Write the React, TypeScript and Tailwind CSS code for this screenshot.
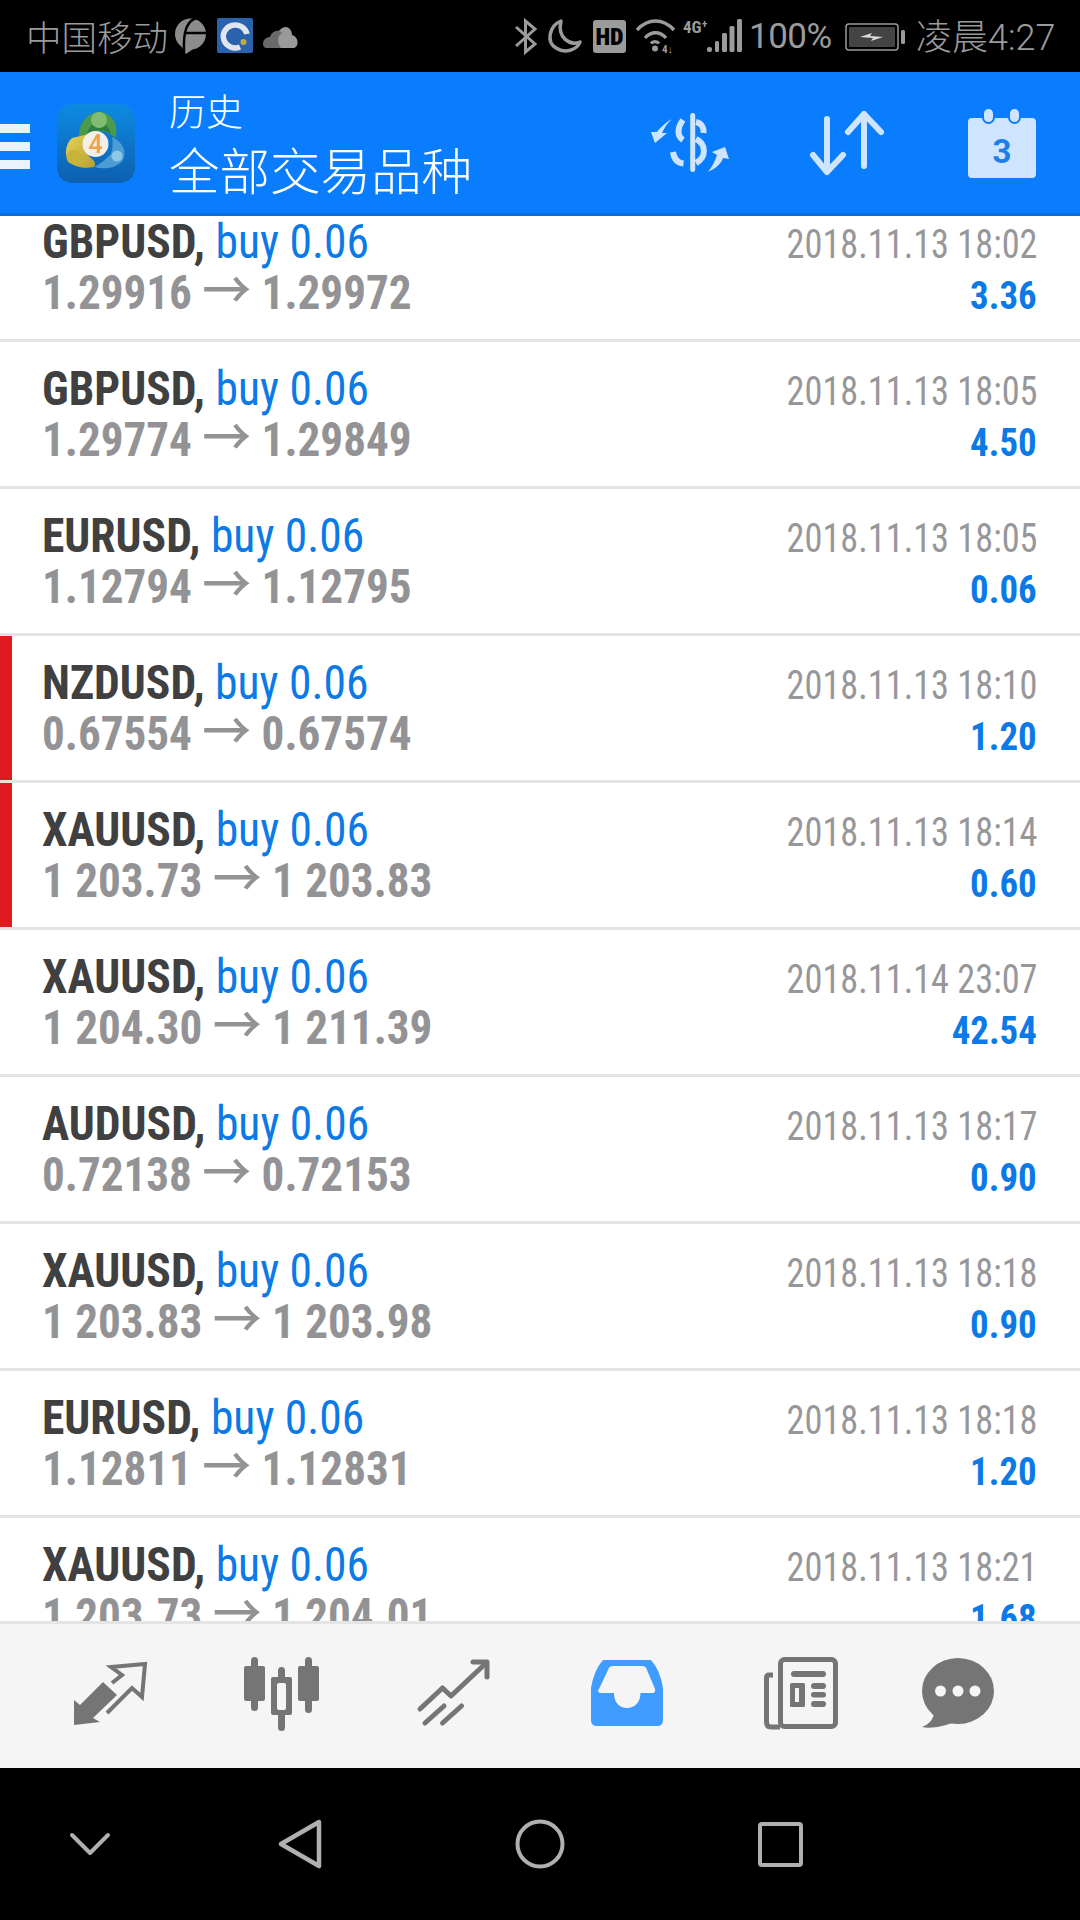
import React from "react";

const rows = [
  { s: "GBPUSD", a: "1.29916", b: "1.29972", d: "2018.11.13 18:02", p: "3.36" },
  { s: "GBPUSD", a: "1.29774", b: "1.29849", d: "2018.11.13 18:05", p: "4.50" },
  { s: "EURUSD", a: "1.12794", b: "1.12795", d: "2018.11.13 18:05", p: "0.06" },
  { s: "NZDUSD", a: "0.67554", b: "0.67574", d: "2018.11.13 18:10", p: "1.20", red: true },
  { s: "XAUUSD", a: "1 203.73", b: "1 203.83", d: "2018.11.13 18:14", p: "0.60", red: true },
  { s: "XAUUSD", a: "1 204.30", b: "1 211.39", d: "2018.11.14 23:07", p: "42.54" },
  { s: "AUDUSD", a: "0.72138", b: "0.72153", d: "2018.11.13 18:17", p: "0.90" },
  { s: "XAUUSD", a: "1 203.83", b: "1 203.98", d: "2018.11.13 18:18", p: "0.90" },
  { s: "EURUSD", a: "1.12811", b: "1.12831", d: "2018.11.13 18:18", p: "1.20" },
  { s: "XAUUSD", a: "1 203.73", b: "1 204.01", d: "2018.11.13 18:21", p: "1.68" },
];

function Row({ r }: { r: (typeof rows)[number] }) {
  return (
    <div className="flex h-[147px] shrink-0 border-b-[3px] border-[#e4e4e4]">
      <div className={r.red ? "w-[12px] shrink-0 bg-[#e01b20]" : "w-[12px] shrink-0"} />
      <div className="flex flex-1 justify-between pl-[30px] pr-[43px] pt-[22px] [font-stretch:75%]">
        <div className="flex flex-col whitespace-nowrap">
          <div className="h-[50px] origin-left scale-x-[.93] text-[49px] leading-[50px]">
            <span className="font-bold text-[#404040]">{r.s}, </span>
            <span className="text-[#0b7ae6]">buy 0.06</span>
          </div>
          <div className="h-[50px] origin-left scale-x-[.94] text-[48px] leading-[50px] font-bold text-[#939396]">
            {r.a} <span className="text-[52px] font-medium">→</span> {r.b}
          </div>
        </div>
        <div className="flex flex-col items-end whitespace-nowrap">
          <div className="origin-right scale-x-[.885] pt-[2px] text-[41px] leading-[50px] text-[#97979a]">{r.d}</div>
          <div className="origin-right scale-x-[.97] pt-[2px] text-[38px] leading-[50px] font-bold text-[#0b7ae6]">{r.p}</div>
        </div>
      </div>
    </div>
  );
}

const G = "#9b9b9b";

function StatusLeftIcons() {
  return (
    <svg width="130" height="72" viewBox="170 0 130 72" className="shrink-0">
      <circle cx="190.5" cy="34" r="15.5" fill="#8c8c8c" />
      <path d="M181,46 L186,54 L196,47 Z" fill="#8c8c8c" />
      <path d="M199,17 C187,20 183,30 184,52" fill="none" stroke="#000" strokeWidth="2.5" />
      <path d="M184,33 H208" fill="none" stroke="#000" strokeWidth="2.5" />
      <rect x="217" y="18" width="36" height="35" rx="2" fill="#2a62ae" />
      <path d="M247,34 A12,11.5 0 1 0 240,47" fill="none" stroke="#dfe6ee" strokeWidth="5.5" />
      <circle cx="243.5" cy="42" r="3" fill="#c9a93f" />
      <path d="M276,48 C272,40 273,33 280,30 C285,24 292,28 292,35 C298,36 300,46 294,48 Z" fill="#9a9a9a" />
      <path d="M263,44 C263,39 267,37 270,37 C272,30 280,29 282,33 C276,37 278,44 281,48 H267 C264,48 263,46 263,44 Z" fill="#6a6a6a" />
    </svg>
  );
}

function StatusRightIcons() {
  return (
    <svg width="230" height="72" viewBox="513 0 230 72" className="shrink-0">
      <path d="M516,27 L535,44 L525.5,52 V21 L535,29 L516,46" fill="none" stroke={G} strokeWidth="3" />
      <path d="M561,21 C549,26 546,42 556,48 C565,54 577,50 580,42 C570,46 557,38 561,21 Z" fill="none" stroke={G} strokeWidth="3.5" strokeLinejoin="round" />
      <rect x="593" y="20" width="33" height="33" rx="3" fill={G} />
      <text x="609.5" y="45" textAnchor="middle" fontFamily="Roboto, sans-serif" fontWeight="900" fontSize="24" fill="#000" style={{ fontStretch: "75%" }}>HD</text>
      <path d="M637,30 C648,18 663,18 674,30 M645,38 C651,31 660,31 666,38 M651,43.5 C653,41 657,41 659,43.5" fill="none" stroke={G} strokeWidth="3.4" />
      <circle cx="655" cy="48.5" r="3" fill={G} />
      <text x="662" y="53" fontFamily="Roboto, sans-serif" fontWeight="700" fontSize="11" fill={G} style={{ fontStretch: "75%" }}>4↓</text>
      <text x="683" y="33" fontFamily="Roboto, sans-serif" fontWeight="700" fontSize="17" fill={G} style={{ fontStretch: "75%" }}>4G⁺</text>
      <rect x="707" y="47" width="5" height="5" rx="2" fill={G} />
      <rect x="715" y="41" width="4" height="11" rx="1.5" fill={G} />
      <rect x="722" y="33" width="5" height="19" rx="1.5" fill={G} />
      <rect x="729.5" y="26" width="5" height="26" rx="1.5" fill={G} />
      <rect x="737" y="19" width="5" height="33" rx="1.5" fill={G} />
    </svg>
  );
}

function Battery() {
  return (
    <svg width="62" height="72" viewBox="844 0 62 72" className="shrink-0">
      <rect x="845" y="24" width="52" height="26" rx="3" fill="none" stroke={G} strokeWidth="1.5" />
      <rect x="848" y="27" width="46" height="20" rx="1" fill="#444" />
      <path d="M859,37 L871,33 L869,36 L882,37 L870,41 L872,38 Z" fill="#ddd" />
      <rect x="900" y="30" width="4" height="14" rx="1.5" fill={G} />
    </svg>
  );
}

function Logo() {
  return (
    <svg width="78" height="79" viewBox="0 0 78 79" className="shrink-0">
      <defs>
        <linearGradient id="lg" x1="0" y1="0" x2="0" y2="1">
          <stop offset="0" stopColor="#0c8be2" />
          <stop offset="1" stopColor="#0e5fb0" />
        </linearGradient>
        <linearGradient id="ly" x1="0" y1="0" x2="1" y2="1">
          <stop offset="0" stopColor="#e6d25a" />
          <stop offset="1" stopColor="#b8a030" />
        </linearGradient>
      </defs>
      <rect width="78" height="79" rx="15" fill="url(#lg)" />
      <path d="M23,37 C19,22 30,8 42,8 C55,8 63,22 58,34 C50,24 33,25 23,37 Z" fill="#4c9a4c" />
      <path d="M30,30 C32,22 37,18 42,20 C47,18 52,22 54,30 C47,25 37,25 30,30 Z" fill="#2f7d45" />
      <circle cx="42" cy="16" r="8" fill="#7fbd73" />
      <path d="M15,34 L32,30 C26,36 26,44 32,52 C36,56 40,58 37,63 C28,65 18,63 12,58 C7,52 8,40 15,34 Z" fill="url(#ly)" />
      <circle cx="17" cy="53" r="7.5" fill="#c8b23a" />
      <path d="M55,33 C66,38 70,48 66,56 C60,64 48,66 37,63 C44,60 50,54 54,50 C56,44 56,38 55,33 Z" fill="#4d9cd4" />
      <circle cx="60" cy="52" r="5.5" fill="#8cc8e8" />
      <circle cx="38.5" cy="40" r="13" fill="#f2efe9" />
      <text x="38.5" y="49" textAnchor="middle" fontFamily="Roboto, sans-serif" fontWeight="500" fontSize="25" fill="#f0a24a">4</text>
    </svg>
  );
}

const L = "#cfe5ff";

function HeaderActions() {
  return (
    <svg width="400" height="141" viewBox="650 72 400 141" className="shrink-0">
      <path d="M692.7,115.5 V169.5" stroke={L} strokeWidth="5" strokeLinecap="round" />
      <path d="M696,122 C701,123 704,127 703.5,133 M683,120 C677,128 677,136 683,140 M696,139 C706,144 707,157 696,163 M673,152 C674,159 678,163 683.5,163.5" fill="none" stroke={L} strokeWidth="6" />
      <path d="M671.7,119 C664,124 660,128 657,132 L651,132 L655,143 L667,133 L662,133 C664,128 667,124 671.7,119 Z" fill={L} />
      <path d="M708,172 C716,168 721,164 723,158 L729,159 L725,147 L712,152 L717,155 C715,161 712,167 708,172 Z" fill={L} />
      <path d="M827,119 V172 M813,155 L827,172 L843,155" fill="none" stroke={L} strokeWidth="6" strokeLinecap="round" strokeLinejoin="round" />
      <path d="M864,114 V166 M848,132 L864,114 L881,132" fill="none" stroke={L} strokeWidth="6" strokeLinecap="round" strokeLinejoin="round" />
      <rect x="968" y="118" width="68" height="60" rx="4" fill={L} />
      <rect x="983" y="108" width="11" height="15" rx="5.5" fill={L} stroke="#0a7dff" strokeWidth="2" />
      <rect x="1009" y="108" width="11" height="15" rx="5.5" fill={L} stroke="#0a7dff" strokeWidth="2" />
      <text x="1002" y="163" textAnchor="middle" fontFamily="Roboto, sans-serif" fontWeight="700" fontSize="33" fill="#1a7fe8">3</text>
    </svg>
  );
}

const T = "#757575";

function Tabs() {
  return (
    <div className="flex h-[147px] shrink-0 border-t-[3px] border-[#e4e4e4] bg-[#f5f5f5] pl-[70px] pt-[31px]">
      <svg width="80" height="80" viewBox="70 1655 80 80" className="shrink-0">
        <path d="M74,1725 V1700 L80,1705 L103,1682 L117,1695 L93,1718 L100,1722 Z" fill={T} />
        <path d="M112,1683 L122,1675 L111,1667 L145,1664 L142,1697 L132,1688 L107,1713" fill="none" stroke={T} strokeWidth="4" />
      </svg>
      <svg width="83" height="82" viewBox="240 1655 83 82" className="ml-[90px] shrink-0">
        <rect x="251" y="1657" width="7" height="54" rx="3.5" fill={T} />
        <rect x="244" y="1666" width="21" height="35" rx="2" fill={T} />
        <rect x="278" y="1667" width="7" height="64" rx="3.5" fill={T} />
        <rect x="271" y="1677" width="21" height="38" rx="2" fill={T} />
        <rect x="277" y="1683" width="9" height="27" rx="2" fill="#f5f5f5" />
        <rect x="305" y="1657" width="7" height="56" rx="3.5" fill={T} />
        <rect x="298" y="1666" width="21" height="35" rx="2" fill={T} />
      </svg>
      <svg width="77" height="80" viewBox="415 1655 77 80" className="ml-[92px] shrink-0">
        <path d="M420,1709 L442.5,1688 L451,1696 L484,1665" fill="none" stroke={T} strokeWidth="5" strokeLinecap="round" strokeLinejoin="round" />
        <path d="M473,1662 H487 V1677" fill="none" stroke={T} strokeWidth="5" strokeLinecap="round" strokeLinejoin="round" />
        <path d="M425,1723 L444,1706 M442.5,1723 L461.5,1706" fill="none" stroke={T} strokeWidth="5" strokeLinecap="round" />
      </svg>
      <svg width="78" height="80" viewBox="588 1655 78 80" className="ml-[96px] shrink-0">
        <path d="M603,1660 H651 Q660,1670 663,1688 V1720 Q663,1726 657,1726 H597 Q591,1726 591,1720 V1688 Q594,1670 603,1660 Z" fill="#409cff" />
        <path d="M598,1691 Q598,1692 600,1693 H614 C614,1703 620,1708 627,1708 C634,1708 640.5,1703 640.5,1693 H653 Q656,1692 655,1689 L647,1670 Q646,1666 642,1666 H613 Q609,1666 608,1670 Z" fill="#f5f5f5" />
      </svg>
      <svg width="82" height="80" viewBox="760 1655 82 80" className="ml-[94px] shrink-0">
        <rect x="780.5" y="1659.5" width="55" height="67" rx="4" fill="none" stroke={T} strokeWidth="5" />
        <path d="M773,1675 H769 Q766.5,1675 766.5,1678 V1722 Q766.5,1727 771,1727 H780" fill="none" stroke={T} strokeWidth="5" />
        <rect x="791" y="1671" width="35" height="6" rx="3" fill={T} />
        <rect x="790" y="1683" width="15" height="24" rx="1.5" fill={T} />
        <rect x="795" y="1688" width="4" height="14" fill="#f5f5f5" />
        <rect x="811" y="1683" width="15" height="6" rx="3" fill={T} />
        <rect x="811" y="1692" width="15" height="5.5" rx="2.75" fill={T} />
        <rect x="811" y="1701" width="15" height="6" rx="3" fill={T} />
      </svg>
      <svg width="80" height="80" viewBox="918 1655 80 80" className="ml-[76px] shrink-0">
        <ellipse cx="958" cy="1691" rx="36" ry="33" fill={T} />
        <path d="M934,1712 C934,1718 930,1724 922,1727 C932,1729 945,1726 954,1722 Z" fill={T} />
        <circle cx="940.5" cy="1691" r="5.5" fill="#f5f5f5" />
        <circle cx="958" cy="1691" r="5.5" fill="#f5f5f5" />
        <circle cx="975" cy="1691" r="5.5" fill="#f5f5f5" />
      </svg>
    </div>
  );
}

function NavBar() {
  const N = "#b0b0b0";
  return (
    <div className="flex h-[152px] shrink-0 items-center bg-black">
      <svg width="1080" height="152" viewBox="0 1768 1080 152" className="shrink-0">
        <path d="M72,1835 L90,1853 L108,1835" fill="none" stroke={N} strokeWidth="4" strokeLinecap="round" strokeLinejoin="round" />
        <path d="M319,1822 L281,1844 L319,1866 Z" fill="none" stroke={N} strokeWidth="4.5" strokeLinejoin="round" />
        <circle cx="540" cy="1844" r="22.5" fill="none" stroke={N} strokeWidth="4" />
        <rect x="760" y="1824" width="41" height="41" rx="2" fill="none" stroke={N} strokeWidth="4" />
      </svg>
    </div>
  );
}

export default function App() {
  return (
    <div className="flex h-[1920px] w-[1080px] flex-col overflow-hidden bg-white font-['Roboto','Noto_Sans_CJK_SC',sans-serif]">
      <div className="flex h-[72px] shrink-0 items-center bg-black text-[#9b9b9b]">
        <span className="w-[140px] shrink-0 pl-[26px] text-[35.5px] font-light leading-none font-['Noto_Sans_CJK_SC',sans-serif] whitespace-nowrap">中国移动</span>
        <div className="ml-[30px]"><StatusLeftIcons /></div>
        <div className="ml-[213px]"><StatusRightIcons /></div>
        <span className="ml-[6px] w-[84px] shrink-0 text-[35px] leading-none tracking-[-0.5px] whitespace-nowrap">100%</span>
        <div className="ml-[12px]"><Battery /></div>
        <span className="ml-[9px] text-[36px] leading-none font-light whitespace-nowrap">
          <span className="font-['Noto_Sans_CJK_SC',sans-serif] text-[36px]">凌晨</span>4:27
        </span>
      </div>

      <div className="flex h-[144px] shrink-0 items-stretch border-b-[3px] border-[#0a6fd8] bg-[#0a7dff]">
        <div className="flex w-[30px] shrink-0 flex-col gap-[9px] pt-[52px]">
          <div className="h-[9px] bg-[#e9f3ff]" />
          <div className="h-[9px] bg-[#e9f3ff]" />
          <div className="h-[9px] bg-[#e9f3ff]" />
        </div>
        <div className="ml-[27px] pt-[32px]"><Logo /></div>
        <div className="ml-[34px] flex w-[400px] shrink-0 flex-col text-white font-['Noto_Sans_CJK_SC',sans-serif] whitespace-nowrap">
          <div className="pt-[16px] text-[37px] font-light leading-[44px]">历史</div>
          <div className="pt-[6px] text-[50.5px] font-light leading-[60px]">全部交易品种</div>
        </div>
        <div className="ml-[81px]"><HeaderActions /></div>
      </div>

      <div className="flex min-h-0 flex-1 flex-col overflow-hidden">
        <div className="-mt-[21px] flex flex-col">
          {rows.map((r, i) => (
            <Row key={i} r={r} />
          ))}
        </div>
      </div>

      <Tabs />
      <NavBar />
    </div>
  );
}
